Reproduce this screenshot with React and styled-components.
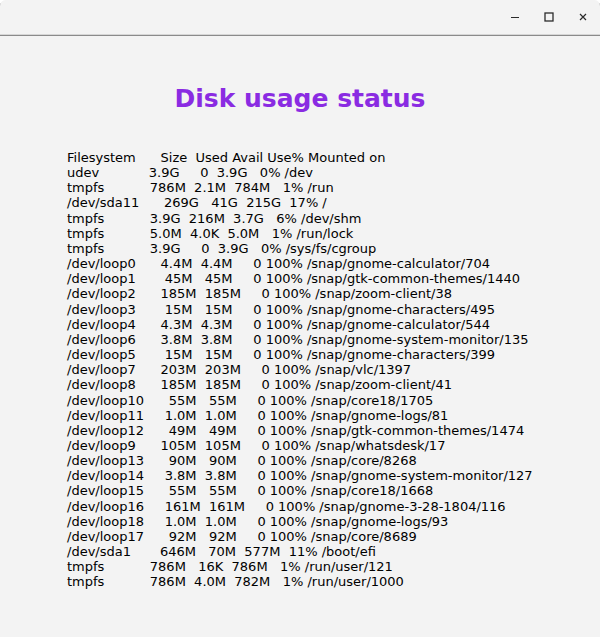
import React from 'react';
import styled, { createGlobalStyle } from 'styled-components';

const GlobalStyle = createGlobalStyle`
  html, body {
    margin: 0;
    padding: 0;
    background: #ffffff;
  }
`;

const Window = styled.div`
  width: 600px;
  height: 637px;
  display: flex;
  flex-direction: column;
  background: #f3f3f3;
  border-radius: 6px 6px 0 0;
  overflow: hidden;
  font-family: "DejaVu Sans", sans-serif;
`;

const TitleBar = styled.div`
  height: 34px;
  flex-shrink: 0;
  display: flex;
  justify-content: flex-end;
  align-items: center;
  background: #f3f3f3;
  border-bottom: 1px solid #d6d6d6;
  box-shadow: 0 1px 0 #8a8a8a;
  margin-bottom: 1px;
`;

const WindowButton = styled.button`
  width: 34px;
  height: 34px;
  padding: 0;
  border: none;
  background: transparent;
  display: flex;
  align-items: center;
  justify-content: center;
  color: #2b2b2b;
`;

const Content = styled.main`
  flex: 1;
  display: flex;
  flex-direction: column;
  padding: 48px 0 0 67px;
`;

const Heading = styled.h1`
  margin: 0 0 37px -67px;
  text-align: center;
  font-size: 25px;
  font-weight: bold;
  color: #8a2be2;
`;

const Output = styled.pre`
  margin: 0;
  font-family: "DejaVu Sans", sans-serif;
  font-size: 13px;
  line-height: 15.15px;
  color: #000;
  white-space: pre;
`;

const dfLines = [
  'Filesystem      Size  Used Avail Use% Mounted on',
  'udev            3.9G     0  3.9G   0% /dev',
  'tmpfs           786M  2.1M  784M   1% /run',
  '/dev/sda11      269G   41G  215G  17% /',
  'tmpfs           3.9G  216M  3.7G   6% /dev/shm',
  'tmpfs           5.0M  4.0K  5.0M   1% /run/lock',
  'tmpfs           3.9G     0  3.9G   0% /sys/fs/cgroup',
  '/dev/loop0      4.4M  4.4M     0 100% /snap/gnome-calculator/704',
  '/dev/loop1       45M   45M     0 100% /snap/gtk-common-themes/1440',
  '/dev/loop2      185M  185M     0 100% /snap/zoom-client/38',
  '/dev/loop3       15M   15M     0 100% /snap/gnome-characters/495',
  '/dev/loop4      4.3M  4.3M     0 100% /snap/gnome-calculator/544',
  '/dev/loop6      3.8M  3.8M     0 100% /snap/gnome-system-monitor/135',
  '/dev/loop5       15M   15M     0 100% /snap/gnome-characters/399',
  '/dev/loop7      203M  203M     0 100% /snap/vlc/1397',
  '/dev/loop8      185M  185M     0 100% /snap/zoom-client/41',
  '/dev/loop10      55M   55M     0 100% /snap/core18/1705',
  '/dev/loop11     1.0M  1.0M     0 100% /snap/gnome-logs/81',
  '/dev/loop12      49M   49M     0 100% /snap/gtk-common-themes/1474',
  '/dev/loop9      105M  105M     0 100% /snap/whatsdesk/17',
  '/dev/loop13      90M   90M     0 100% /snap/core/8268',
  '/dev/loop14     3.8M  3.8M     0 100% /snap/gnome-system-monitor/127',
  '/dev/loop15      55M   55M     0 100% /snap/core18/1668',
  '/dev/loop16     161M  161M     0 100% /snap/gnome-3-28-1804/116',
  '/dev/loop18     1.0M  1.0M     0 100% /snap/gnome-logs/93',
  '/dev/loop17      92M   92M     0 100% /snap/core/8689',
  '/dev/sda1       646M   70M  577M  11% /boot/efi',
  'tmpfs           786M   16K  786M   1% /run/user/121',
  'tmpfs           786M  4.0M  782M   1% /run/user/1000',
];

const MinimizeIcon = () => (
  <svg width="10" height="10" viewBox="0 0 10 10">
    <line x1="1" y1="5.5" x2="9" y2="5.5" stroke="currentColor" strokeWidth="1" />
  </svg>
);

const MaximizeIcon = () => (
  <svg width="10" height="10" viewBox="0 0 10 10">
    <rect x="1" y="1" width="8" height="8" fill="none" stroke="currentColor" strokeWidth="1.3" />
  </svg>
);

const CloseIcon = () => (
  <svg width="10" height="10" viewBox="0 0 10 10">
    <path d="M2 2 L8 8 M8 2 L2 8" stroke="currentColor" strokeWidth="1.2" />
  </svg>
);

export default function App() {
  return (
    <>
      <GlobalStyle />
      <Window>
        <TitleBar>
          <WindowButton aria-label="Minimize"><MinimizeIcon /></WindowButton>
          <WindowButton aria-label="Maximize"><MaximizeIcon /></WindowButton>
          <WindowButton aria-label="Close"><CloseIcon /></WindowButton>
        </TitleBar>
        <Content>
          <Heading>Disk usage status</Heading>
          <Output>{dfLines.join('\n')}</Output>
        </Content>
      </Window>
    </>
  );
}
